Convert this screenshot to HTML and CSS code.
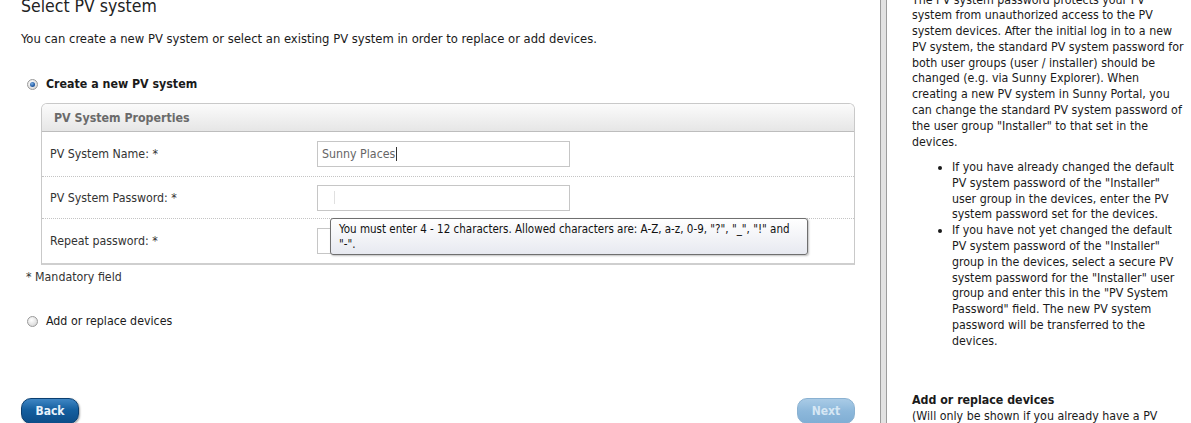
FILE: index.html
```html
<!DOCTYPE html>
<html lang="en">
<head>
<meta charset="utf-8">
<title>Select PV system</title>
<link rel="stylesheet" href="styles.css">
</head>
<body>
<div class="page">
  <main class="main">
    <h1 class="title">Select PV system</h1>
    <p class="intro">You can create a new PV system or select an existing PV system in order to replace or add devices.</p>
    <div class="radio-row bold"><span class="radio checked"></span>Create a new PV system</div>
    <div class="panel">
      <div class="panel-head">PV System Properties</div>
      <div class="row r1">
        <span class="label">PV System Name: *</span>
        <div class="input"><span class="val">Sunny Places</span><span class="caret"></span></div>
      </div>
      <div class="row r2">
        <span class="label">PV System Password: *</span>
        <div class="input"><span class="ibeam"></span></div>
      </div>
      <div class="row r3">
        <span class="label">Repeat password: *</span>
        <div class="input"></div>
        <div class="tooltip">You must enter 4 - 12 characters. Allowed characters are: A-Z, a-z, 0-9, "?", "_", "!" and<br>"-".</div>
      </div>
    </div>
    <div class="mandatory">* Mandatory field</div>
    <div class="divider"></div>
    <div class="radio-row add"><span class="radio"></span>Add or replace devices</div>
    <div class="buttons">
      <button class="btn back">Back</button>
      <button class="btn next">Next</button>
    </div>
  </main>
  <div class="sep"></div>
  <aside class="side">
    <p class="side-p">The PV system password protects your PV<br>system from unauthorized access to the PV<br>system devices. After the initial log in to a new<br>PV system, the standard PV system password for<br>both user groups (user / installer) should be<br>changed (e.g. via Sunny Explorer). When<br>creating a new PV system in Sunny Portal, you<br>can change the standard PV system password of<br>the user group "Installer" to that set in the<br>devices.</p>
    <ul class="side-list">
      <li>If you have already changed the default<br>PV system password of the "Installer"<br>user group in the devices, enter the PV<br>system password set for the devices.</li>
      <li>If you have not yet changed the default<br>PV system password of the "Installer"<br>group in the devices, select a secure PV<br>system password for the "Installer" user<br>group and enter this in the "PV System<br>Password" field. The new PV system<br>password will be transferred to the<br>devices.</li>
    </ul>
    <h2 class="side-h">Add or replace devices</h2>
    <p class="side-note">(Will only be shown if you already have a PV</p>
  </aside>
</div>
</body>
</html>
```
FILE: styles.css
```css
* { box-sizing: border-box; }
html, body { margin: 0; padding: 0; background: #fff; }
body {
  font-family: "DejaVu Sans Condensed", "DejaVu Sans", sans-serif;
  font-stretch: semi-condensed;
  font-size: 12.3px;
  color: #1a1a1a;
  overflow: hidden;
  height: 423px;
}
.page {
  display: flex;
  height: 423px;
}
.main {
  width: 880px;
  flex: none;
  padding: 0 25px 0 21px;
  display: flex;
  flex-direction: column;
}
.title {
  margin: -6px 0 0;
  font-size: 17.5px;
  line-height: 24px;
  font-weight: normal;
  color: #222;
}
.intro {
  margin: 13px 0 0;
  font-size: 12.9px;
  line-height: 16px;
}
.radio-row {
  display: flex;
  align-items: center;
  line-height: 16px;
  margin-top: 29px;
  padding-left: 6px;
}
.radio-row.bold { font-weight: bold; }
.radio-row.add { margin-top: 18px; }
.radio {
  width: 11px;
  height: 11px;
  border-radius: 50%;
  border: 1px solid #9a9a9a;
  background: radial-gradient(circle at 40% 35%, #ffffff 0%, #e2e2e2 60%, #c8c8c8 100%);
  margin-right: 8px;
  flex: none;
  display: flex;
  align-items: center;
  justify-content: center;
}
.radio.checked::after {
  content: "";
  width: 5px;
  height: 5px;
  border-radius: 50%;
  background: radial-gradient(circle at 40% 35%, #7fb2e6 0%, #2760a8 55%, #183f78 100%);
}
.panel {
  margin-top: 11px;
  margin-left: 20px;
  border: 1px solid #c9c9c9;
  border-bottom: 2px solid #cfcfcf;
  border-radius: 6px 6px 0 0;
}
.panel-head {
  height: 28px;
  line-height: 28px;
  padding-left: 12px;
  font-weight: bold;
  color: #6a6a6a;
  background: linear-gradient(#fbfbfb, #e6e6e6);
  border-bottom: 1px solid #bdbdbd;
  border-radius: 5px 5px 0 0;
}
.row {
  display: grid;
  grid-template-columns: 267px 253px;
  align-items: center;
  padding-left: 8px;
  position: relative;
}
.row.r1 { height: 45px; border-bottom: 1px dotted #c4c4c4; }
.row.r2 { height: 42px; border-bottom: 1px dotted #c4c4c4; }
.row.r3 { height: 44px; }
.label { color: #333; }
.input {
  height: 26px;
  border: 1px solid #c6c6c6;
  background: #fff;
  display: flex;
  align-items: center;
  padding-left: 4px;
  color: #666;
}
.caret {
  width: 1px;
  height: 14px;
  background: #333;
  margin-left: 1px;
}
.ibeam {
  width: 1px;
  height: 13px;
  margin-left: 12px;
  background: #e0e0e0;
}
.tooltip {
  position: absolute;
  left: 288px;
  top: -1px;
  width: 478px;
  height: 37px;
  padding: 3px 8px 0 8px;
  font-size: 11.5px;
  line-height: 15px;
  white-space: nowrap;
  color: #111;
  background: linear-gradient(#ffffff, #e7e9f0);
  border: 1px solid #6f6f6f;
  border-radius: 3px;
  box-shadow: 1px 1px 2px rgba(0,0,0,0.25);
}
.mandatory {
  margin-top: 4px;
  padding-left: 5px;
  line-height: 16px;
  color: #333;
}
.divider {
  margin-top: 10px;
  height: 1px;
  background: #e6e6e6;
}
.buttons {
  margin-top: 69px;
  display: flex;
  justify-content: space-between;
}
.btn {
  width: 58px;
  height: 26px;
  border-radius: 10px;
  font-family: inherit;
  font-stretch: inherit;
  font-size: 12px;
  font-weight: bold;
  padding: 0;
  cursor: pointer;
}
.btn.back {
  color: #e8f2fb;
  background: linear-gradient(#3f86c4 0%, #145f9f 45%, #0c4d88 100%);
  border: 1px solid #0b3f70;
  box-shadow: 1px 1px 2px rgba(0,0,0,0.35);
}
.btn.next {
  color: #d6e7f4;
  background: linear-gradient(#a9cbe6 0%, #8db8db 50%, #80aed4 100%);
  border: 1px solid #8ab1d1;
}
.sep {
  width: 7px;
  flex: none;
  background: #e2e2e2;
  border-left: 1px solid #9c9c9c;
  border-right: 1px solid #9c9c9c;
}
.side {
  padding-left: 25px;
  white-space: nowrap;
  line-height: 15.8px;
  color: #1a1a1a;
}
.side-p { margin: -7.5px 0 0; }
.side-list {
  margin: 9.6px 0 0;
  padding-left: 40px;
}
.side-h {
  margin: 43.4px 0 0;
  font-size: 12.3px;
  line-height: 15.8px;
  font-weight: bold;
}
.side-note { margin: 0; }
```
